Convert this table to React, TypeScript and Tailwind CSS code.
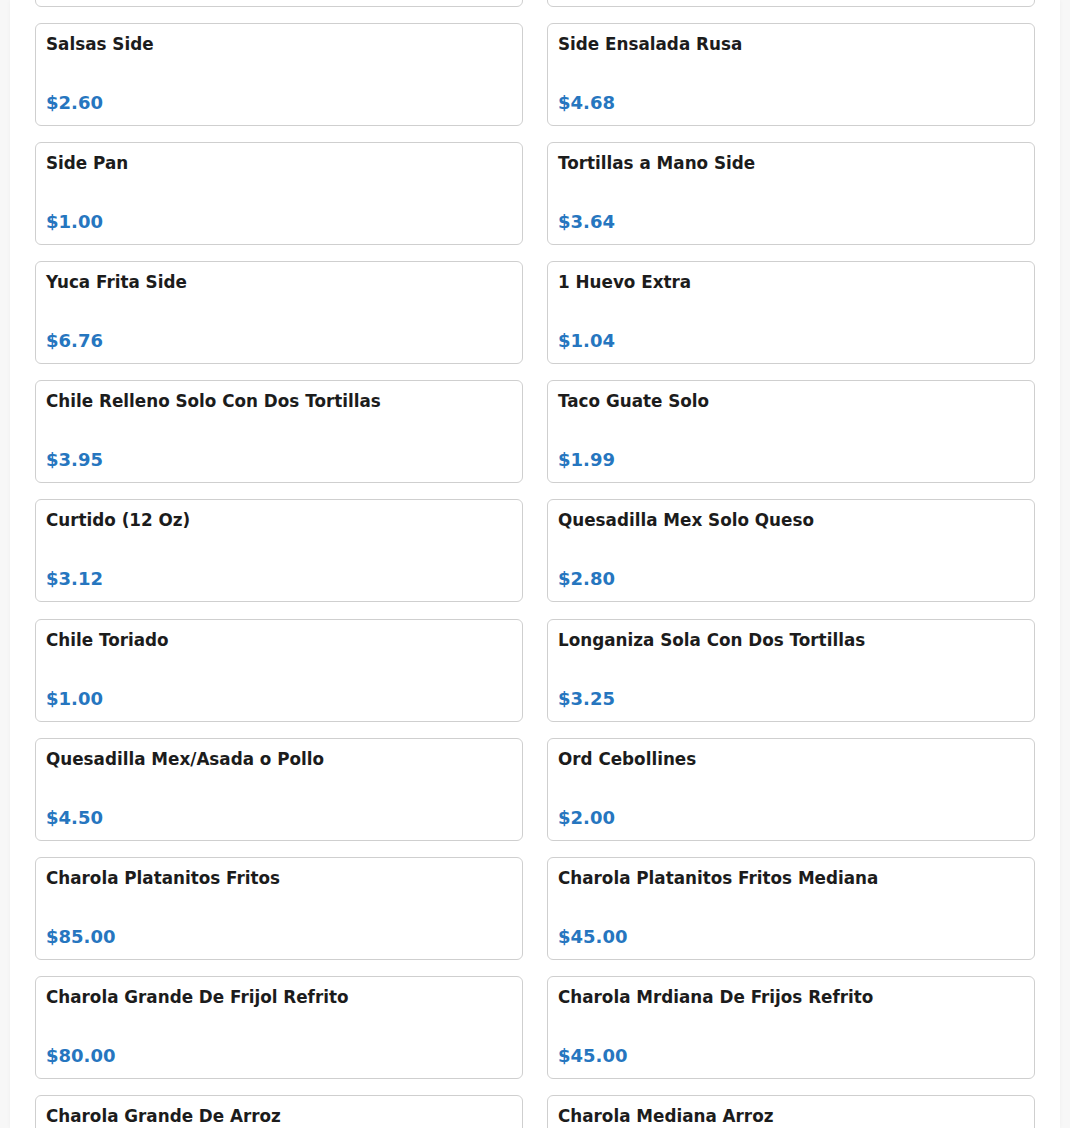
import React from "react";

interface MenuItem {
  name: string;
  price: string;
}

const items: MenuItem[] = [
  { name: "Salsa Verde Extra", price: "$1.50" },
  { name: "Side Arroz", price: "$2.60" },
  { name: "Salsas Side", price: "$2.60" },
  { name: "Side Ensalada Rusa", price: "$4.68" },
  { name: "Side Pan", price: "$1.00" },
  { name: "Tortillas a Mano Side", price: "$3.64" },
  { name: "Yuca Frita Side", price: "$6.76" },
  { name: "1 Huevo Extra", price: "$1.04" },
  { name: "Chile Relleno Solo Con Dos Tortillas", price: "$3.95" },
  { name: "Taco Guate Solo", price: "$1.99" },
  { name: "Curtido (12 Oz)", price: "$3.12" },
  { name: "Quesadilla Mex Solo Queso", price: "$2.80" },
  { name: "Chile Toriado", price: "$1.00" },
  { name: "Longaniza Sola Con Dos Tortillas", price: "$3.25" },
  { name: "Quesadilla Mex/Asada o Pollo", price: "$4.50" },
  { name: "Ord Cebollines", price: "$2.00" },
  { name: "Charola Platanitos Fritos", price: "$85.00" },
  { name: "Charola Platanitos Fritos Mediana", price: "$45.00" },
  { name: "Charola Grande De Frijol Refrito", price: "$80.00" },
  { name: "Charola Mrdiana De Frijos Refrito", price: "$45.00" },
  { name: "Charola Grande De Arroz", price: "$80.00" },
  { name: "Charola Mediana Arroz", price: "$45.00" },
];

function ItemCard({ item }: { item: MenuItem }) {
  return (
    <div className="h-[103px] rounded-md border border-[#cfcfcf] bg-white px-[10px] pt-[10px]">
      <h3 className="text-[16.8px] font-bold leading-[20px] text-[#1c1c1c]">
        {item.name}
      </h3>
      <p className="mt-[35px] text-[18px] font-bold leading-[28px] text-[#2676bf]">
        {item.price}
      </p>
    </div>
  );
}

export default function App() {
  return (
    <div className="h-[1128px] overflow-hidden bg-[#f7f7f7] px-[10px] font-['DejaVu_Sans',sans-serif]">
      <div className="flex h-full flex-col bg-white px-[25px] shadow-[0_0_4px_rgba(0,0,0,0.04)]">
        {/* list is scrolled: first row sits mostly above the fold */}
        <div className="-mt-[96px] grid grid-cols-2 gap-x-[24px] gap-y-[16.1px]">
          {items.map((item, i) => (
            <ItemCard key={i} item={item} />
          ))}
        </div>
      </div>
    </div>
  );
}
